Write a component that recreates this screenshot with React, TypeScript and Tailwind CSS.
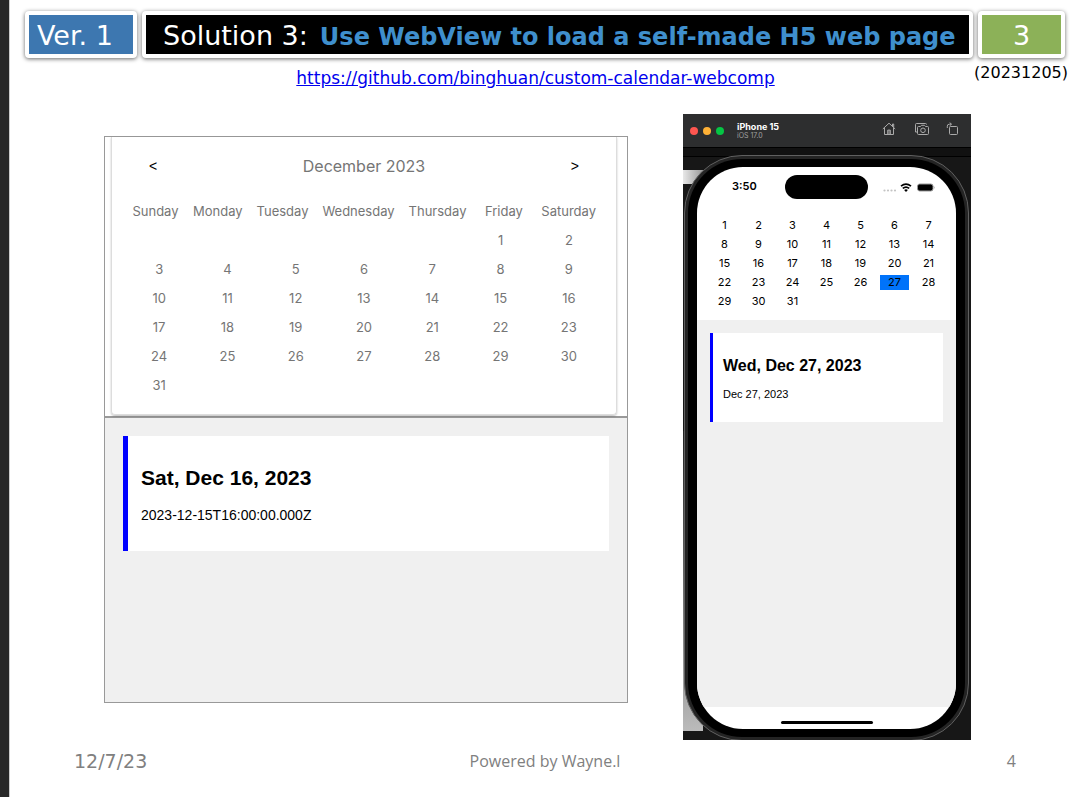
import type { ReactNode } from "react";

const WEEKDAYS = ["Sunday", "Monday", "Tuesday", "Wednesday", "Thursday", "Friday", "Saturday"];

function toWeeks(days: (number | null)[]) {
  const weeks: (number | null)[][] = [];
  for (let i = 0; i < days.length; i += 7) weeks.push(days.slice(i, i + 7));
  return weeks;
}

const MONTH = Array.from({ length: 31 }, (_, i) => i + 1);
const DESKTOP_WEEKS = toWeeks([null, null, null, null, null, ...MONTH]);
const PHONE_WEEKS = toWeeks(MONTH);

function Plate({ className, children }: { className: string; children: ReactNode }) {
  return (
    <div className={`flex h-[47px] items-center rounded-sm border-4 border-white pt-[3px] shadow-[0_1px_4px_rgba(0,0,0,0.6)] ${className}`}>
      {children}
    </div>
  );
}

function Header() {
  return (
    <header className="flex gap-[5px] pl-[15px] pr-[11px] pt-[11px] text-[27px] leading-9 text-white">
      <Plate className="w-[112px] bg-[#3d77b0] pl-2">Ver. 1</Plate>
      <Plate className="min-w-0 flex-1 whitespace-nowrap bg-black pl-[17px]">
        <h1 className="flex items-baseline gap-3">
          <span>Solution 3:</span>
          <strong className="text-2xl font-bold leading-9 text-[#3f8fcd]">Use WebView to load a self-made H5 web page</strong>
        </h1>
      </Plate>
      <Plate className="w-[87px] justify-center bg-[#8cb158]">3</Plate>
    </header>
  );
}

function DesktopCalendar() {
  return (
    <section className="flex h-[567px] w-[524px] flex-col border border-[#999] bg-[#f0f0f0]">
      <div className="h-[281px] border-b-2 border-[#999] bg-white pl-[6px] pr-[10px] font-['Inter','Liberation_Sans',sans-serif] text-[#757575]">
        <div className="h-[278px] rounded-b border-x border-b border-[#ddd] px-[13px] shadow-[0_1px_2px_rgba(0,0,0,0.25)]">
          <div className="flex h-[58px] items-center justify-between px-6">
            <button type="button" aria-label="Previous month" className="font-['Liberation_Sans',sans-serif] text-sm text-black">&lt;</button>
            <h2 className="text-base">December 2023</h2>
            <button type="button" aria-label="Next month" className="font-['Liberation_Sans',sans-serif] text-sm text-black">&gt;</button>
          </div>
          <table className="mt-0.5 block text-[13px] leading-[29px]">
            <thead className="block">
              <tr className="flex justify-between px-[7px]">
                {WEEKDAYS.map((d) => <th key={d} scope="col" className="min-w-[47px] text-center font-normal">{d}</th>)}
              </tr>
            </thead>
            <tbody className="block">
              {DESKTOP_WEEKS.map((week, i) => (
                <tr key={i} className="grid grid-cols-7 text-center">
                  {week.map((d, j) => <td key={j}>{d}</td>)}
                </tr>
              ))}
            </tbody>
          </table>
        </div>
      </div>
      <div className="p-[18px] font-['Liberation_Sans',sans-serif] text-black">
        <article className="h-[115px] border-l-[5px] border-[#0000ff] bg-white pl-[13px] pt-[28px]">
          <h3 className="text-[21px] font-bold leading-7">Sat, Dec 16, 2023</h3>
          <p className="pt-[13px] text-sm leading-5">2023-12-15T16:00:00.000Z</p>
        </article>
      </div>
    </section>
  );
}

function HomeIcon() {
  return (
    <svg viewBox="0 0 14 14" className="size-3.5" fill="none" stroke="currentColor" strokeWidth="1">
      <path d="M.8 7 7 1.2 13.2 7M10.5 4.2V2h1.2v3.4M2.5 5.8v6.7h9V5.8M5.7 12.3V8.1h2.6v4.2M7 8.2v4" />
    </svg>
  );
}

function ScreenshotIcon() {
  return (
    <svg viewBox="0 0 16 14" className="h-3.5 w-4" fill="none" stroke="currentColor" strokeWidth="1">
      <path d="M3 10H1.5V2.5q0-1 1-1h9q1 0 1 1" />
      <path d="M4.5 4.5h2l1-1.2h3l1 1.2h2q1 0 1 1v6q0 1-1 1h-9q-1 0-1-1v-6q0-1 1-1Z" />
      <circle cx="9" cy="8.3" r="2.3" />
    </svg>
  );
}

function RotateIcon() {
  return (
    <svg viewBox="0 0 13 14" className="h-3.5 w-[13px]" fill="none" stroke="currentColor" strokeWidth="1">
      <rect x="3.5" y="4.5" width="8" height="8" rx="1" />
      <path d="M1.3 6V4.2q0-2 2-2h2M3.7.6l1.8 1.6-1.8 1.6" />
    </svg>
  );
}

function StatusIcons() {
  return (
    <svg viewBox="0 0 52 12" className="h-3 w-[52px]" role="img" aria-label="Wi-Fi and battery">
      <g fill="#c4c4c4">
        <circle cx="1.5" cy="9.5" r="1.1" /><circle cx="5" cy="9.5" r="1.1" />
        <circle cx="8.5" cy="9.5" r="1.1" /><circle cx="12" cy="9.5" r="1.1" />
      </g>
      <g fill="none" stroke="black" strokeWidth="1.7">
        <path d="M18 5.2q5-4.2 10 0M19.8 7.4q3.2-2.7 6.4 0" />
      </g>
      <path d="M21.1 9q1.9-1.5 3.8 0L23 11Z" />
      <rect x="34.5" y="3" width="15.5" height="7" rx="2.2" fill="black" stroke="#999" />
      <path d="M51 5.2q1.2 1.3 0 2.6Z" fill="#999" />
    </svg>
  );
}

function Simulator() {
  return (
    <section className="relative isolate h-[626px] w-[288px] overflow-hidden bg-[#171717] font-['Inter','Liberation_Sans',sans-serif]">
      <div className="flex h-[33px] items-center bg-[#2d2e2f] pl-[7px] pr-3">
        <div className="flex gap-[5px]">
          <span className="size-2 rounded-full bg-[#ff5650]" />
          <span className="size-2 rounded-full bg-[#ffb136]" />
          <span className="size-2 rounded-full bg-[#05c544]" />
        </div>
        <div className="ml-[13px] flex-1">
          <p className="text-[9px] font-bold leading-[9px] text-white">iPhone 15</p>
          <p className="text-[7px] leading-[9px] text-[#a0a0a0]">iOS 17.0</p>
        </div>
        <div className="flex gap-4 self-start pt-2 text-[#aaa]">
          <button type="button" aria-label="Home" className="mr-0.5"><HomeIcon /></button>
          <button type="button" aria-label="Screenshot"><ScreenshotIcon /></button>
          <button type="button" aria-label="Rotate"><RotateIcon /></button>
        </div>
      </div>
      <div className="h-2.5 border-y border-black bg-[#111]" />
      <div className="absolute left-0 top-14 -z-10 h-[14px] w-5 bg-gradient-to-r from-[#e8e8e8] to-[#999]" />
      <div className="absolute bottom-[9px] left-0 -z-10 h-[300px] w-5 bg-gradient-to-b from-[#222] to-[#bbb]" />
      <div className="ml-px mr-0.5 mt-[-2px] h-[586px] rounded-[58px] border border-[#606060] bg-[#242424] p-[3px]">
        <div className="h-full rounded-[54px] bg-black px-[9px] py-2">
          <div className="flex h-full flex-col overflow-hidden rounded-[46px] bg-white text-black">
            <div className="flex h-[39px] items-center pl-[35px] pr-[21px]">
              <time className="w-[53px] text-[11px] font-semibold">3:50</time>
              <div className="h-6 w-[83px] rounded-full bg-black" />
              <div className="ml-auto"><StatusIcons /></div>
            </div>
            <table className="mx-[13px] mt-[10px] block h-[104px] text-[11px] leading-[15px]">
              <tbody className="block">
                {PHONE_WEEKS.map((week, i) => (
                  <tr key={i} className="grid h-[19px] grid-cols-7 gap-[5px] text-center">
                    {week.map((d) => (
                      <td key={d} className={d === 27 ? "h-[15px] self-center bg-[#0073fa]" : "self-center"}>{d}</td>
                    ))}
                  </tr>
                ))}
              </tbody>
            </table>
            <div className="flex-1 bg-[#f0f0f0] px-[13px] pt-[13px] font-['Liberation_Sans',sans-serif]">
              <article className="h-[89px] border-l-[3px] border-[#0000ff] bg-white pl-2.5 pt-[23px]">
                <h3 className="text-base font-bold leading-5">Wed, Dec 27, 2023</h3>
                <p className="pt-2.5 text-[11px] leading-4">Dec 27, 2023</p>
              </article>
            </div>
            <div className="flex h-[22px] items-end justify-center pb-[5px]">
              <div className="h-[3px] w-[92px] rounded-full bg-black" />
            </div>
          </div>
        </div>
      </div>
    </section>
  );
}

export default function App() {
  return (
    <div className="flex min-h-screen bg-white font-['DejaVu_Sans',sans-serif]">
      <div className="w-2.5 shrink-0 border-r border-[#ccc] bg-[#282828]" />
      <div className="flex min-w-0 flex-1 flex-col">
        <Header />
        <div className="grid grid-cols-[1fr_auto_1fr] pr-2 text-base leading-6">
          <a href="https://github.com/binghuan/custom-calendar-webcomp" className="col-start-2 mr-[7px] mt-2 text-[17px] text-[#0000ee] underline">
            https://github.com/binghuan/custom-calendar-webcomp
          </a>
          <p className="mt-[3px] text-right text-black">(20231205)</p>
        </div>
        <main className="mt-6 flex justify-between pl-[94px] pr-[105px]">
          <div className="pt-[22px]"><DesktopCalendar /></div>
          <Simulator />
        </main>
        <footer className="mt-2 grid grid-cols-3 items-center pl-16 pr-[60px] text-base leading-[26px] text-[#808080]">
          <time className="text-[19px]">12/7/23</time>
          <p className="text-center font-['Open_Sans',sans-serif]">Powered by Wayne.l</p>
          <p className="text-right font-['Open_Sans',sans-serif]">4</p>
        </footer>
      </div>
    </div>
  );
}
